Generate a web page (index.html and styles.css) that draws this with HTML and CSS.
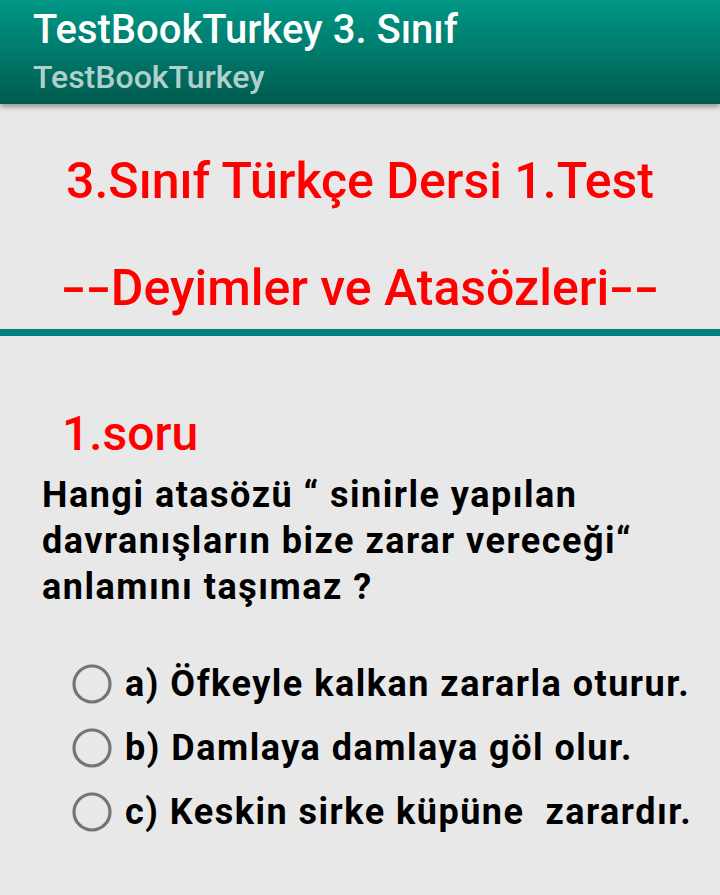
FILE: index.html
```html
<!DOCTYPE html>
<html lang="tr">
<head>
<meta charset="utf-8">
<title>TestBookTurkey 3. Sınıf</title>
<link rel="stylesheet" href="styles.css">
</head>
<body>
<header class="appbar">
  <div class="appbar-title">TestBookTurkey 3. Sınıf</div>
  <div class="appbar-subtitle">TestBookTurkey</div>
</header>
<main class="content">
  <h1 class="heading heading-first">3.Sınıf Türkçe Dersi 1.Test</h1>
  <h2 class="heading heading-second"><span class="dash">-</span><span class="dash">-</span>Deyimler ve Atasözleri<span class="dash">-</span><span class="dash">-</span></h2>
  <div class="divider"></div>
  <div class="question-no">1.soru</div>
  <p class="question">Hangi atasözü “ sinirle yapılan davranışların bize zarar vereceği“ anlamını taşımaz ?</p>
  <ul class="options">
    <li class="option">
      <svg class="radio" viewBox="0 0 40 40" width="40" height="40"><circle cx="20" cy="20" r="18" fill="none" stroke="#757575" stroke-width="3.2"/></svg>
      <span class="option-text">a) Öfkeyle kalkan zararla oturur.</span>
    </li>
    <li class="option">
      <svg class="radio" viewBox="0 0 40 40" width="40" height="40"><circle cx="20" cy="20" r="18" fill="none" stroke="#757575" stroke-width="3.2"/></svg>
      <span class="option-text">b) Damlaya damlaya göl olur.</span>
    </li>
    <li class="option">
      <svg class="radio" viewBox="0 0 40 40" width="40" height="40"><circle cx="20" cy="20" r="18" fill="none" stroke="#757575" stroke-width="3.2"/></svg>
      <span class="option-text">c) Keskin sirke küpüne  zarardır.</span>
    </li>
  </ul>
</main>
</body>
</html>
```
FILE: styles.css
```css
html, body {
  margin: 0;
  padding: 0;
}
body {
  background: #e8e8e8;
  font-family: Roboto, "Noto Sans", "Liberation Sans", sans-serif;
  width: 720px;
  height: 895px;
  overflow: hidden;
}
.appbar {
  height: 104px;
  box-sizing: border-box;
  padding: 6px 0 0 33px;
  background: linear-gradient(to bottom, #009684 0%, #007a6c 50%, #005a4e 100%);
  box-shadow: 0 3px 5px rgba(0, 0, 0, 0.35);
  position: relative;
  z-index: 1;
}
.appbar-title {
  color: #ffffff;
  font-size: 40px;
  font-weight: 500;
  line-height: 48px;
}
.appbar-subtitle {
  margin-top: 3px;
  color: rgba(255, 255, 255, 0.7);
  font-size: 32px;
  font-weight: 500;
  line-height: 40px;
}
.content {
  display: flex;
  flex-direction: column;
}
.heading {
  margin: 0;
  color: #ff0000;
  font-size: 50px;
  font-weight: 500;
  line-height: 60px;
  text-align: center;
}
.heading-first {
  margin-top: 47px;
}
.heading-second {
  margin-top: 47px;
}
.dash {
  display: inline-block;
  width: 25px;
  transform: scaleX(1.45);
  text-align: center;
}
.divider {
  margin-top: 11px;
  height: 7px;
  background: #008080;
}
.question-no {
  margin-top: 70px;
  padding-left: 62px;
  color: #ff0000;
  font-size: 48px;
  font-weight: 500;
  line-height: 56px;
}
.question {
  margin: 10px 0 0 0;
  padding: 0 30px 0 42px;
  color: #000000;
  font-size: 36px;
  font-weight: 700;
  letter-spacing: 1.5px;
  line-height: 46px;
}
.options {
  list-style: none;
  margin: 42px 0 0 0;
  padding: 0 0 0 72px;
}
.option {
  display: flex;
  align-items: center;
  gap: 13px;
  height: 64px;
}
.radio {
  flex: none;
  display: block;
}
.option-text {
  color: #000000;
  font-size: 36px;
  font-weight: 700;
  letter-spacing: 1.5px;
  line-height: 64px;
  white-space: pre;
}
```
